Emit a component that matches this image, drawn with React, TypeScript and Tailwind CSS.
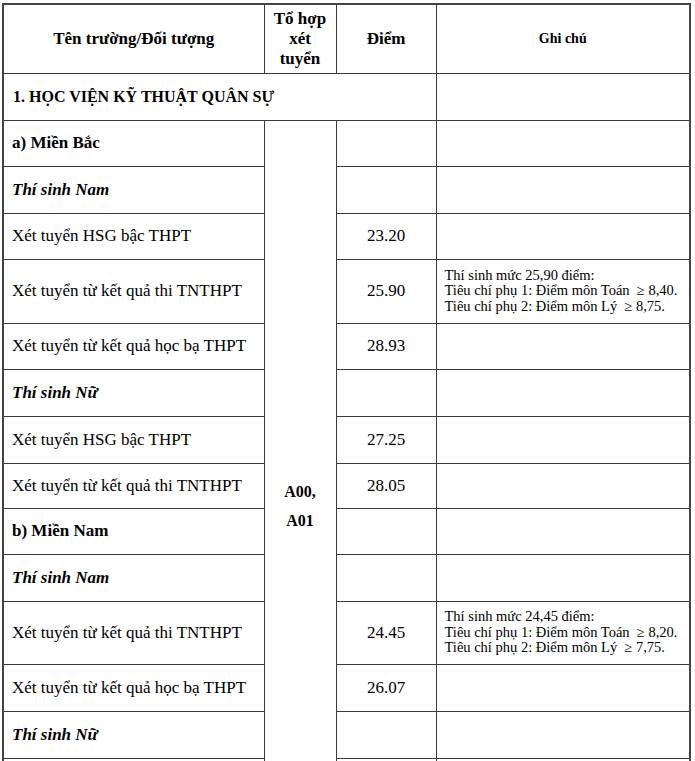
import React from "react";

type Row = {
  label: string;
  kind: "group" | "sub" | "item";
  score?: string;
  note?: string[];
  h: number;
};

const rows: Row[] = [
  { label: "a) Miền Bắc", kind: "group", h: 46 },
  { label: "Thí sinh Nam", kind: "sub", h: 47 },
  { label: "Xét tuyển HSG bậc THPT", kind: "item", score: "23.20", h: 46 },
  {
    label: "Xét tuyển từ kết quả thi TNTHPT",
    kind: "item",
    score: "25.90",
    note: [
      "Thí sinh mức 25,90 điểm:",
      "Tiêu chí phụ 1: Điểm môn Toán  ≥ 8,40.",
      "Tiêu chí phụ 2: Điểm môn Lý  ≥ 8,75.",
    ],
    h: 64,
  },
  { label: "Xét tuyển từ kết quả học bạ THPT", kind: "item", score: "28.93", h: 46 },
  { label: "Thí sinh Nữ", kind: "sub", h: 47 },
  { label: "Xét tuyển HSG bậc THPT", kind: "item", score: "27.25", h: 47 },
  { label: "Xét tuyển từ kết quả thi TNTHPT", kind: "item", score: "28.05", h: 45 },
  { label: "b) Miền Nam", kind: "group", h: 46 },
  { label: "Thí sinh Nam", kind: "sub", h: 47 },
  {
    label: "Xét tuyển từ kết quả thi TNTHPT",
    kind: "item",
    score: "24.45",
    note: [
      "Thí sinh mức 24,45 điểm:",
      "Tiêu chí phụ 1: Điểm môn Toán  ≥ 8,20.",
      "Tiêu chí phụ 2: Điểm môn Lý  ≥ 7,75.",
    ],
    h: 63,
  },
  { label: "Xét tuyển từ kết quả học bạ THPT", kind: "item", score: "26.07", h: 47 },
  { label: "Thí sinh Nữ", kind: "sub", h: 47 },
  { label: "Xét tuyển HSG bậc THPT", kind: "item", score: "26.85", h: 45 },
  { label: "Xét tuyển từ kết quả thi TNTHPT", kind: "item", score: "27.30", h: 45 },
  { label: "Xét tuyển từ kết quả học bạ THPT", kind: "item", score: "28.10", h: 44 },
];

const cell = "border border-[#3a3a3a] align-middle";

function Label({ row }: { row: Row }) {
  if (row.kind === "group") return <span className="font-bold">{row.label}</span>;
  if (row.kind === "sub") return <span className="font-bold italic">{row.label}</span>;
  return <span>{row.label}</span>;
}

export default function App() {
  return (
    <div className="h-[761px] overflow-hidden bg-white pl-[2px] pt-[3px] text-black">
      <table className="w-[687px] table-fixed border-collapse border-2 border-[#444] text-[17px] [font-family:Liberation_Serif,Times_New_Roman,serif]">
        <colgroup>
          <col className="w-[261px]" />
          <col className="w-[72px]" />
          <col className="w-[100px]" />
          <col className="w-[254px]" />
        </colgroup>
        <thead>
          <tr>
            <th className={`${cell} h-[69px] text-center font-bold`}>Tên trường/Đối tượng</th>
            <th className={`${cell} text-center font-bold leading-[20px]`}>
              Tổ hợp
              <br />
              xét
              <br />
              tuyển
            </th>
            <th className={`${cell} text-center font-bold`}>Điểm</th>
            <th className={`${cell} text-center text-[14px] font-bold`}>Ghi chú</th>
          </tr>
        </thead>
        <tbody>
          <tr>
            <td colSpan={3} className={`${cell} h-[47px] pl-[9px] text-[16px] font-bold`}>
              1. HỌC VIỆN KỸ THUẬT QUÂN SỰ
            </td>
            <td className={cell}></td>
          </tr>
          {rows.map((row, i) => (
            <tr key={i}>
              <td className={`${cell} pl-[8px]`} style={{ height: row.h }}>
                <Label row={row} />
              </td>
              {i === 0 && (
                <td rowSpan={rows.length} className={`${cell} text-center text-[16px] font-bold leading-[29px]`}>
                  A00,
                  <br />
                  A01
                </td>
              )}
              <td className={`${cell} text-center`}>{row.score}</td>
              <td className={`${cell} pl-[8px] text-[14.5px] leading-[15.5px]`}>
                {row.note?.map((line, j) => (
                  <div key={j} className="whitespace-pre">
                    {line}
                  </div>
                ))}
              </td>
            </tr>
          ))}
        </tbody>
      </table>
    </div>
  );
}
